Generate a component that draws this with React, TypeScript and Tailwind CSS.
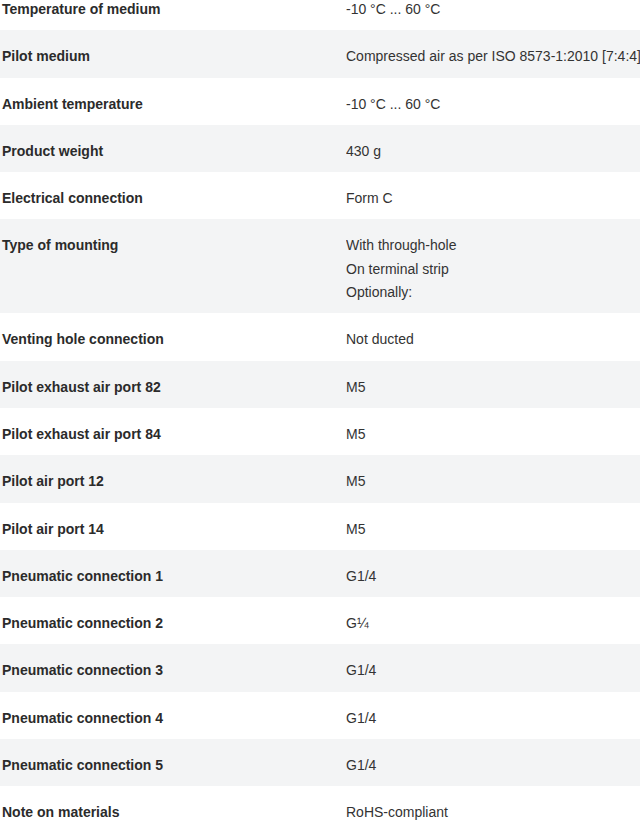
const specs: { label: string; value: string[] }[] = [
  { label: "Temperature of medium", value: ["-10 °C ... 60 °C"] },
  { label: "Pilot medium", value: ["Compressed air as per ISO 8573-1:2010 [7:4:4]"] },
  { label: "Ambient temperature", value: ["-10 °C ... 60 °C"] },
  { label: "Product weight", value: ["430 g"] },
  { label: "Electrical connection", value: ["Form C"] },
  { label: "Type of mounting", value: ["With through-hole", "On terminal strip", "Optionally:"] },
  { label: "Venting hole connection", value: ["Not ducted"] },
  { label: "Pilot exhaust air port 82", value: ["M5"] },
  { label: "Pilot exhaust air port 84", value: ["M5"] },
  { label: "Pilot air port 12", value: ["M5"] },
  { label: "Pilot air port 14", value: ["M5"] },
  { label: "Pneumatic connection 1", value: ["G1/4"] },
  { label: "Pneumatic connection 2", value: ["G¼"] },
  { label: "Pneumatic connection 3", value: ["G1/4"] },
  { label: "Pneumatic connection 4", value: ["G1/4"] },
  { label: "Pneumatic connection 5", value: ["G1/4"] },
  { label: "Note on materials", value: ["RoHS-compliant"] },
];

export default function App() {
  return (
    <div className="w-[640px] h-[820px] overflow-hidden bg-white font-['Liberation_Sans',Arial,sans-serif] text-[14px] text-[#333]">
      <div className="-mt-[17px]">
        {specs.map((row, i) => (
          <div
            key={row.label}
            className={`grid grid-cols-[346px_1fr] pt-[15px] pb-[9px] leading-[23.3px] ${
              i % 2 === 1 ? "bg-[#f3f4f5]" : "bg-white"
            }`}
          >
            <div className="pl-[2px] font-bold text-[#2b2b2b]">{row.label}</div>
            <div className="whitespace-nowrap overflow-hidden">
              {row.value.map((v) => (
                <div key={v}>{v}</div>
              ))}
            </div>
          </div>
        ))}
      </div>
    </div>
  );
}
